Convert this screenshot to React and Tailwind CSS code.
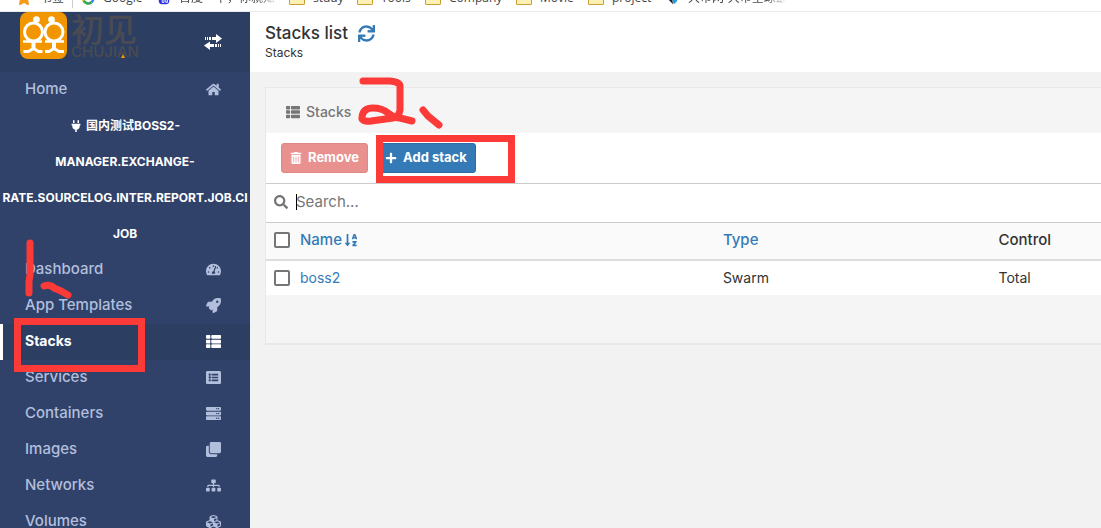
import clsx from 'clsx';
import {
  FaClone,
  FaCubes,
  FaHome,
  FaListAlt,
  FaPlug,
  FaPlus,
  FaRocket,
  FaSearch,
  FaServer,
  FaSitemap,
  FaSortAlphaDown,
  FaStar,
  FaSync,
  FaTachometerAlt,
  FaThList,
  FaTrashAlt,
} from 'react-icons/fa';

const menu = [
  { label: 'Dashboard', icon: FaTachometerAlt },
  { label: 'App Templates', icon: FaRocket },
  { label: 'Stacks', icon: FaThList, active: true },
  { label: 'Services', icon: FaListAlt },
  { label: 'Containers', icon: FaServer },
  { label: 'Images', icon: FaClone },
  { label: 'Networks', icon: FaSitemap },
  { label: 'Volumes', icon: FaCubes },
];

const endpoint = ['MANAGER.EXCHANGE-', 'RATE.SOURCELOG.INTER.REPORT.JOB.CI', 'JOB'];

function Folder() {
  return <span className="h-3.5 w-4 shrink-0 rounded-[1px] border border-[#c99d32] bg-[#fff0b3]" />;
}

function Bookmark({ icon, label, width, fade }) {
  return (
    <a href="#" className="flex shrink-0 items-center gap-2">
      {icon}
      <span
        className={clsx(
          'overflow-hidden whitespace-nowrap',
          width,
          fade && 'bg-linear-to-r from-[#444] from-80% to-white bg-clip-text text-transparent'
        )}
      >
        {label}
      </span>
    </a>
  );
}

function BookmarksBar() {
  return (
    <div className="flex h-3 shrink-0 items-end overflow-hidden border-b border-[#e9e9e9] bg-white">
      <div className="flex h-[26px] shrink-0 items-center gap-3 pl-4 font-['Open_Sans','Noto_Sans_CJK_SC',sans-serif] text-xs text-[#444]">
        <Bookmark icon={<FaStar className="size-4 text-[#f79a1a]" />} label="书签" width="w-6" />
        <span className="-mr-1 -ml-1 h-5 w-px bg-[#ccc]" />
        <Bookmark
          icon={
            <svg viewBox="0 0 16 16" className="size-3.5" fill="none" strokeWidth="3">
              <path d="M13 4A6 6 0 0 0 3 5" stroke="#ea4335" />
              <path d="M3 5a6 6 0 0 0 0 6" stroke="#fbbc05" />
              <path d="M3 11a6 6 0 0 0 9 2" stroke="#34a853" />
              <path d="M8 8h6a6 6 0 0 1-2 5" stroke="#4285f4" />
            </svg>
          }
          label="Google"
          width="w-[42px]"
        />
        <Bookmark
          icon={
            <svg viewBox="0 0 16 16" className="size-3.5" fill="#2a32df">
              <rect x="2" y="6" width="12" height="9" rx="4" />
              <circle cx="3" cy="7" r="2" />
              <circle cx="6" cy="3" r="2" />
              <circle cx="11" cy="3" r="2" />
              <path d="M6 10v3h2v-3M10 10v3h2v-3" stroke="#fff" fill="none" />
            </svg>
          }
          label="百度一下，你就知道"
          width="w-[98px]"
          fade
        />
        <Bookmark icon={<Folder />} label="study" width="w-8" />
        <Bookmark icon={<Folder />} label="Tools" width="w-8" />
        <Bookmark icon={<Folder />} label="Company" width="w-[55px]" />
        <Bookmark icon={<Folder />} label="Movie" width="w-9" />
        <Bookmark icon={<Folder />} label="project" width="w-[42px]" />
        <Bookmark
          icon={
            <svg viewBox="0 0 16 16" className="size-3.5">
              <path d="M8 1 3 6v4l5 5-1-7z" fill="#14213d" />
              <path d="M8 2c7 0 7 10 1 13-2-3-2-9-1-13z" fill="#24a0e0" />
            </svg>
          }
          label="大币网-大币全球最"
          width="w-[98px]"
          fade
        />
      </div>
    </div>
  );
}

function Logo() {
  return (
    <a href="#" className="flex gap-1">
      <svg viewBox="0 0 47 47" className="size-[47px] shrink-0">
        <rect width="47" height="47" rx="8" fill="#f29600" />
        <g fill="none" stroke="#fff" strokeWidth="3">
          <circle cx="13.5" cy="20" r="9" />
          <circle cx="34" cy="20" r="9" />
          <path d="M3 29.5h19M25 29.5h19" strokeWidth="2.6" />
          <path d="M13.5 29v9M34 29v9" strokeWidth="4" />
          <path d="M3.5 39.500h5l5-3 5 3h4M25 39.500h4l5-3 5 3h5" strokeWidth="3" />
        </g>
        <circle cx="16.5" cy="7.5" r="3.3" fill="#fff" />
        <circle cx="31.5" cy="7.5" r="3.3" fill="#fff" />
      </svg>
      <span className="relative flex flex-col text-[#4a4b52]">
        <span className="font-['Noto_Sans_CJK_SC',sans-serif] text-[33px] leading-8 font-medium">初见</span>
        <span className="text-[15px] leading-4 font-medium">CHUJIAN</span>
        <svg viewBox="0 0 4 4" className="absolute right-3.5 bottom-0.5 size-1">
          <path d="M2 0l2 4H0z" fill="#f29600" />
        </svg>
      </span>
    </a>
  );
}

function TransferIcon() {
  return (
    <svg viewBox="0 0 18 16" className="w-[18px]" fill="currentColor">
      <path d="M1 3h1v3H1zM3 3h1v3H3zM5 3h2v3H5zM8 3h4V0l6 4.5L12 9V6H8z" />
      <path d="M17 10h-1v3h1zM15 10h-1v3h1zM13 10h-2v3h2zM10 10H6V7.500L0 11.500 6 16v-3h4z" />
    </svg>
  );
}

function MenuItem({ label, icon: Icon, active }) {
  return (
    <li>
      <a
        href="#"
        className={clsx(
          'flex h-9 items-center justify-between border-l-3 pr-[29px] pb-0.5 pl-[22px]',
          active
            ? 'border-white bg-[#2d3e63] text-sm font-bold text-white'
            : 'border-transparent text-[15px] font-medium text-[#b2bfdc]'
        )}
      >
        {label}
        <span className="flex w-4 justify-center pt-px">
          <Icon className="size-[15px] shrink-0" />
        </span>
      </a>
    </li>
  );
}

function Sidebar() {
  return (
    <aside className="w-[250px] shrink-0 overflow-hidden bg-[#30426a]">
      <div className="flex h-15 items-start justify-between bg-[#2d3e63] pr-7 pl-5">
        <Logo />
        <button type="button" aria-label="Toggle sidebar" className="self-center text-white">
          <TransferIcon />
        </button>
      </div>
      <ul>
        <MenuItem label="Home" icon={FaHome} />
        <li className="text-center text-xs leading-9 font-bold text-white">
          <div className="flex items-center justify-center gap-1">
            <FaPlug className="size-3" />
            <span>国内测试BOSS2-</span>
          </div>
          {endpoint.map((line) => (
            <div key={line} className="whitespace-nowrap">{line}</div>
          ))}
        </li>
        {menu.map((item) => (
          <MenuItem key={item.label} {...item} />
        ))}
      </ul>
    </aside>
  );
}

function Checkbox({ label }) {
  return (
    <input
      type="checkbox"
      aria-label={label}
      className="block size-4 shrink-0 appearance-none rounded-xs border-2 border-[#767676] bg-white checked:bg-[#337ab7]"
    />
  );
}

function StacksTable() {
  return (
    <table className="w-full table-fixed text-left">
      <colgroup>
        <col className="w-[54%]" />
        <col className="w-[33%]" />
        <col />
      </colgroup>
      <thead className="border-b-2 border-[#ddd] bg-[#fafafa] text-[15px]">
        <tr className="h-[37px]">
          <th className="px-2 pb-0.5 font-medium">
            <div className="flex items-center gap-2.5">
              <Checkbox label="Select all" />
              <a href="#" className="flex items-center gap-0.5 text-[#337ab7]">
                Name <FaSortAlphaDown className="size-3.5" />
              </a>
            </div>
          </th>
          <th className="px-1.5 pb-0.5 font-medium">
            <a href="#" className="text-[#337ab7]">Type</a>
          </th>
          <th className="px-1.5 pb-0.5 font-medium">Control</th>
        </tr>
      </thead>
      <tbody className="bg-white text-sm">
        <tr className="h-[35px]">
          <td className="px-2">
            <div className="flex items-center gap-2.5">
              <Checkbox label="Select boss2" />
              <a href="#" className="text-[#337ab7]">boss2</a>
            </div>
          </td>
          <td className="px-1.5">Swarm</td>
          <td className="px-1.5">Total</td>
        </tr>
      </tbody>
    </table>
  );
}

// Freehand marker notes over the page
function Annotations() {
  return (
    <svg
      width="520"
      height="380"
      className="pointer-events-none absolute top-0 left-0"
      fill="none"
      stroke="#fc3a38"
      strokeWidth="7"
      strokeLinecap="round"
      strokeLinejoin="round"
    >
      <rect x="17.5" y="321.5" width="124" height="47" strokeLinejoin="miter" />
      <rect x="379.5" y="138.5" width="132" height="41" strokeLinejoin="miter" />
      <path d="M30 243v32l-1 6v12" />
      <path d="M44 286q6-2 10 2l7 3 7 4" />
      <path d="M363 81h27q10 1 10 5v24q-1 7-7 8l-22 3q-10 1-9-4 1-9 11-9 9 0 15 5 6 5 12 5l12 3" />
      <path d="M423 110l5 6 11 9" />
    </svg>
  );
}

export default function App() {
  return (
    <div className="relative flex h-screen flex-col overflow-hidden bg-[#f2f2f2] font-[Inter,'Noto_Sans_CJK_SC',sans-serif] text-[#333]">
      <BookmarksBar />
      <div className="flex min-h-0 flex-1">
        <Sidebar />
        <main className="min-w-0 flex-1">
          <header className="h-15 bg-white px-[15px] pt-[9px]">
            <h1 className="flex items-center gap-2.5 text-[17px] leading-6 font-medium">
              Stacks list
              <button type="button" aria-label="Refresh" className="text-[#337ab7]">
                <FaSync className="size-[17px]" />
              </button>
            </h1>
            <p className="text-xs leading-4">Stacks</p>
          </header>

          <section className="mt-[15px] ml-[15px] border border-r-0 border-b-2 border-[#e8e8e8] bg-[#f5f5f5]">
            <h2 className="flex h-[45px] items-center gap-1.5 px-5 pt-0.5 text-sm font-medium text-[#767676]">
              <FaThList className="size-3.5" />
              Stacks
            </h2>

            <div className="flex h-[50px] items-center gap-2 bg-white px-[15px]">
              <button
                type="button"
                disabled
                className="flex h-[30px] items-center gap-1.5 rounded-[3px] border border-[#e08885] bg-[#e8918e] px-2 text-[13px] font-bold text-white"
              >
                <FaTrashAlt className="size-3" />
                Remove
              </button>
              <button
                type="button"
                className="flex h-[30px] items-center gap-1.5 rounded-[3px] border border-[#2e6da4] bg-[#337ab7] px-2 text-[13px] font-bold text-white"
              >
                <FaPlus className="size-3" />
                Add stack
              </button>
            </div>

            <label className="flex h-10 items-center gap-2 border-y border-[#ccc] bg-white px-2 pb-0.5 text-[#767676]">
              <FaSearch className="size-3.5" />
              <span className="relative flex flex-1 items-center">
                <span className="absolute left-0 h-4 w-px bg-black" />
                <input
                  type="text"
                  placeholder="Search..."
                  aria-label="Search"
                  className="w-full text-[15px] outline-none placeholder:text-[#767676]"
                />
              </span>
            </label>

            <StacksTable />
            <div className="h-12" />
          </section>
        </main>
      </div>
      <Annotations />
    </div>
  );
}
